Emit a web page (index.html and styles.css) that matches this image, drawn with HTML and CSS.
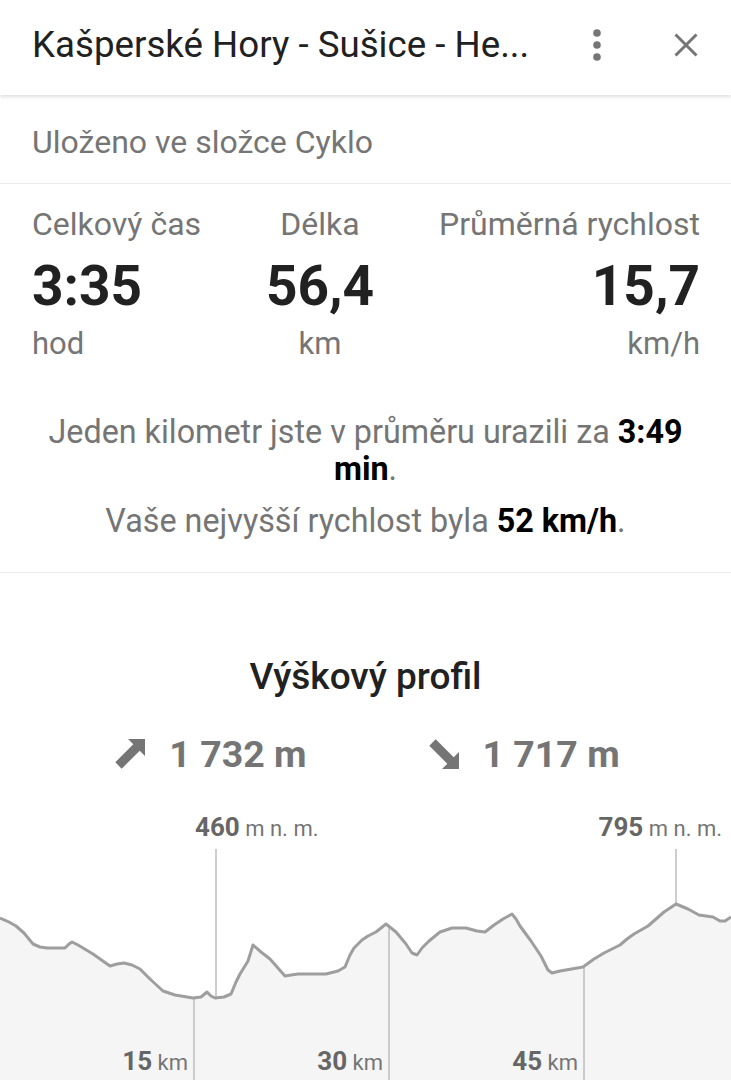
FILE: index.html
```
<!DOCTYPE html>
<html lang="cs">
<head>
    <meta charset="UTF-8">
    <meta name="viewport" content="width=device-width, initial-scale=1.0">
    <title>Kašperské Hory - Sušice - Hejnice</title>
    <link rel="stylesheet" href="styles.css">
</head>
<body>

<div class="header">
    <h1 class="title">Kašperské Hory - Sušice - He...</h1>
    <button class="icon-btn menu-btn" aria-label="Více">
        <svg width="24" height="32" viewBox="0 0 24 32">
            <circle cx="12" cy="4" r="3.8"/>
            <circle cx="12" cy="16" r="3.8"/>
            <circle cx="12" cy="28" r="3.8"/>
        </svg>
    </button>
    <button class="icon-btn close-btn" aria-label="Zavřít">
        <svg width="24" height="24" viewBox="0 0 24 24">
            <path d="M1.5 1.5 L22.5 22.5 M22.5 1.5 L1.5 22.5"/>
        </svg>
    </button>
</div>

<div class="folder">Uloženo ve složce Cyklo</div>

<!-- Summary of the ride -->
<div class="stats">
    <div class="stat stat-left">
        <div class="stat-label">Celkový čas</div>
        <div class="stat-value">3:35</div>
        <div class="stat-unit">hod</div>
    </div>
    <div class="stat stat-center">
        <div class="stat-label">Délka</div>
        <div class="stat-value">56,4</div>
        <div class="stat-unit">km</div>
    </div>
    <div class="stat stat-right">
        <div class="stat-label">Průměrná rychlost</div>
        <div class="stat-value">15,7</div>
        <div class="stat-unit">km/h</div>
    </div>
</div>

<div class="notes">
    <p>Jeden kilometr jste v průměru urazili za <b>3:49 min</b>.</p>
    <p>Vaše nejvyšší rychlost byla <b>52 km/h</b>.</p>
</div>

<!-- Elevation profile -->
<div class="profile">
    <h2 class="profile-title">Výškový profil</h2>

    <div class="climb">
        <div class="climb-item">
            <svg width="30" height="30" viewBox="0 0 30 30">
                <polygon points="13,0 30,0 30,17 24.7,11.7 6.7,29.7 0.3,23.3 18.3,5.3"/>
            </svg>
            <span>1 732 m</span>
        </div>
        <div class="climb-item">
            <svg width="30" height="30" viewBox="0 0 30 30">
                <polygon points="13,30 30,30 30,13 24.7,18.3 6.7,0.3 0.3,6.7 18.3,24.7"/>
            </svg>
            <span>1 717 m</span>
        </div>
    </div>

    <div class="chart">
        <svg width="731" height="280" viewBox="0 0 731 280">
            <path class="area" d="M0,117 L9,121 L16,125 L24,132 L33,143 L40,146 L47,147 L65,147 L69,143 L72,141 L78,144 L93,153 L110,165 L117,163 L124,162 L132,164 L140,168 L150,178 L163,190 L175,194 L193,197 L201,196 L207,191 L211,195 L215,197 L224,196 L231,193 L236,181 L240,173 L248,160 L253,144 L261,151 L270,158 L285,175 L291,174 L298,173 L326,173 L338,170 L345,166 L350,154 L354,147 L362,139 L368,135 L376,131 L386,123 L396,131 L406,143 L412,152 L417,154 L422,147 L429,140 L440,131 L452,127 L466,127 L477,130 L485,131 L494,124 L503,118 L512,113 L516,118 L520,125 L531,140 L541,155 L548,169 L552,172 L560,170 L583,166 L594,158 L604,152 L620,144 L627,138 L634,133 L648,125 L664,111 L676,103 L688,108 L699,114 L713,116 L720,120 L725,120 L731,116 L731,280 L0,280 Z"/>
            <line class="marker" x1="216" y1="48" x2="216" y2="196"/>
            <line class="marker" x1="676" y1="48" x2="676" y2="103"/>
            <line class="marker" x1="194" y1="197" x2="194" y2="280"/>
            <line class="marker" x1="389" y1="125" x2="389" y2="280"/>
            <line class="marker" x1="584" y1="166" x2="584" y2="280"/>
            <path class="line" d="M0,117 L9,121 L16,125 L24,132 L33,143 L40,146 L47,147 L65,147 L69,143 L72,141 L78,144 L93,153 L110,165 L117,163 L124,162 L132,164 L140,168 L150,178 L163,190 L175,194 L193,197 L201,196 L207,191 L211,195 L215,197 L224,196 L231,193 L236,181 L240,173 L248,160 L253,144 L261,151 L270,158 L285,175 L291,174 L298,173 L326,173 L338,170 L345,166 L350,154 L354,147 L362,139 L368,135 L376,131 L386,123 L396,131 L406,143 L412,152 L417,154 L422,147 L429,140 L440,131 L452,127 L466,127 L477,130 L485,131 L494,124 L503,118 L512,113 L516,118 L520,125 L531,140 L541,155 L548,169 L552,172 L560,170 L583,166 L594,158 L604,152 L620,144 L627,138 L634,133 L648,125 L664,111 L676,103 L688,108 L699,114 L713,116 L720,120 L725,120 L731,116"/>

            <text class="label" x="195" y="35"><tspan class="num">460</tspan> m n. m.</text>
            <text class="label" x="722" y="35" text-anchor="end"><tspan class="num">795</tspan> m n. m.</text>

            <text class="label" x="188" y="269" text-anchor="end"><tspan class="num">15</tspan> km</text>
            <text class="label" x="383" y="269" text-anchor="end"><tspan class="num">30</tspan> km</text>
            <text class="label" x="578" y="269" text-anchor="end"><tspan class="num">45</tspan> km</text>
        </svg>
    </div>
</div>

</body>
</html>
```

FILE: styles.css
```
body {
    font-family: Roboto, "Noto Sans", Arial, sans-serif;
    background-color: #fff;
    color: #212121;
    margin: 0;
    padding: 0;
    width: 731px;
    overflow: hidden;
}

.header {
    height: 95px;
    box-sizing: border-box;
    display: flex;
    align-items: center;
    padding: 0 23px 6px 32px;
    box-shadow: 0 2px 3px rgba(0, 0, 0, 0.12);
    position: relative;
}

.title {
    flex: 1;
    margin: 0;
    font-size: 36.7px;
    font-weight: 400;
    color: #212121;
    white-space: nowrap;
}

.icon-btn {
    background: none;
    border: none;
    padding: 0;
    display: flex;
    align-items: center;
    justify-content: center;
}

.menu-btn {
    width: 44px;
    height: 44px;
    margin-right: 45px;
}

.menu-btn svg {
    fill: #757575;
}

.close-btn {
    width: 44px;
    height: 44px;
}

.close-btn svg {
    stroke: #757575;
    stroke-width: 3;
    fill: none;
}

.folder {
    padding: 29px 32px 23px;
    font-size: 32px;
    line-height: 36px;
    color: #757575;
    border-bottom: 1px solid #ebebeb;
}

/* three columns: left, center, right */
.stats {
    display: flex;
    justify-content: space-between;
    padding: 22px 31px 0 32px;
}

.stat-center {
    text-align: center;
}

.stat-right {
    text-align: right;
}

.stat-label {
    font-size: 32px;
    line-height: 36px;
    color: #757575;
}

.stat-value {
    margin-top: 14px;
    font-size: 55px;
    line-height: 60px;
    font-weight: 700;
    color: #212121;
}

.stat-unit {
    margin-top: 10px;
    font-size: 31px;
    line-height: 36px;
    color: #757575;
}

.notes {
    padding: 52px 30px 32px;
    text-align: center;
    border-bottom: 1px solid #ebebeb;
}

.notes p {
    margin: 0;
    font-size: 32.3px;
    line-height: 37px;
    color: #757575;
}

.notes p + p {
    margin-top: 15px;
}

.notes b {
    color: #000;
}

.profile {
    padding-top: 84px;
}

.profile-title {
    margin: 0;
    text-align: center;
    font-size: 37px;
    line-height: 40px;
    font-weight: 500;
    color: #212121;
}

.climb {
    display: flex;
    justify-content: center;
    gap: 122px;
    margin-top: 37px;
    padding-left: 4px;
}

.climb-item {
    display: flex;
    align-items: center;
    gap: 24px;
    font-size: 37.5px;
    line-height: 40px;
    font-weight: 700;
    color: #757575;
}

.climb-item svg {
    fill: #757575;
}

.chart {
    margin-top: 27px;
    height: 280px;
}

.chart svg {
    display: block;
}

.chart .area {
    fill: #f5f5f5;
}

.chart .line {
    fill: none;
    stroke: #9e9e9e;
    stroke-width: 3;
    stroke-linejoin: round;
}

.chart .marker {
    stroke: #bdbdbd;
    stroke-width: 1.5;
}

.chart .label {
    font-family: Roboto, Arial, sans-serif;
    font-size: 22px;
    fill: #757575;
}

.chart .label .num {
    font-size: 26px;
    font-weight: 700;
    fill: #666;
}
```
